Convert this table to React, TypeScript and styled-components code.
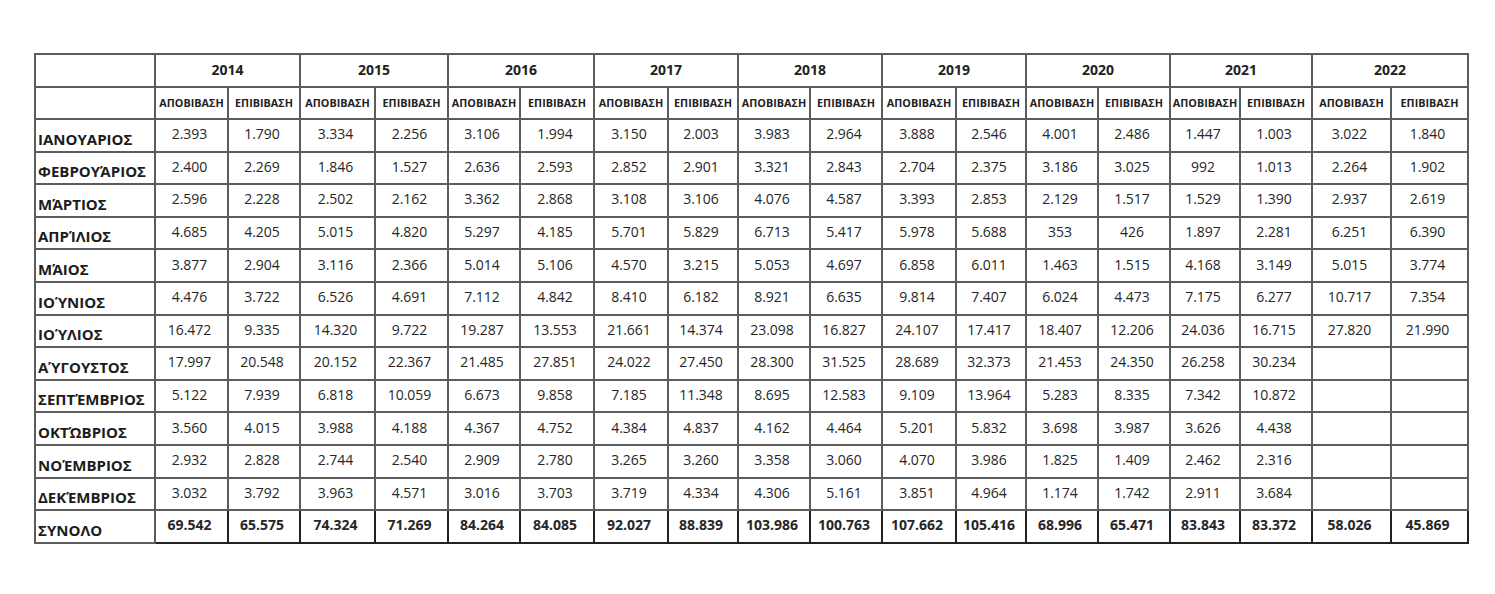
import React from "react";
import styled, { createGlobalStyle } from "styled-components";

const Global = createGlobalStyle`
  body {
    margin: 0;
    background: #ffffff;
    font-family: "Open Sans", "Liberation Sans", sans-serif;
    color: #1f1f1f;
  }
`;

const Page = styled.div`
  padding: 53px 0 0 34px;
  height: 594px;
  box-sizing: border-box;
`;

const Table = styled.table`
  border-collapse: collapse;
  table-layout: fixed;
  width: 1430px;
  border: 2px solid #202020;
`;

const line = "2px solid #5c5c5c";
const strong = "2px solid #202020";

const HeadRow = styled.tr`
  height: 32.5px;
`;

const YearCell = styled.th<{ $last?: boolean }>`
  border: ${line};
  border-left: ${(p) => (p.$last ? strong : line)};
  font-size: 14px;
  font-weight: 700;
  text-align: center;
  vertical-align: middle;
  padding: 0 0 2px;
  color: #222;
`;

const SubCell = styled.th<{ $last?: boolean }>`
  border: ${line};
  border-left: ${(p) => (p.$last ? strong : line)};
  font-size: 10.8px;
  font-weight: 700;
  text-align: center;
  vertical-align: middle;
  padding: 0;
  white-space: nowrap;
  overflow: hidden;
  color: #222;
`;

const Row = styled.tr<{ $total?: boolean }>`
  height: 32.6px;
  border-top: ${(p) => (p.$total ? strong : line)};
`;

const MonthCell = styled.td`
  border: ${line};
  font-size: 15px;
  font-weight: 700;
  vertical-align: bottom;
  padding: 0 0 2px 2px;
  white-space: nowrap;
  overflow: hidden;
  color: #1c1c1c;
`;

const NumCell = styled.td<{ $bold?: boolean; $last?: boolean }>`
  border: ${(p) => (p.$bold ? strong : line)};
  border-left: ${(p) => (p.$last || p.$bold ? strong : line)};
  font-size: 14px;
  font-weight: ${(p) => (p.$bold ? 700 : 400)};
  text-align: center;
  vertical-align: middle;
  padding: 0 4px 3px 0;
  color: #262626;
`;

const years = ["2014", "2015", "2016", "2017", "2018", "2019", "2020", "2021", "2022"];
const subWidths = [
  [73, 72], [75, 73], [72, 74], [74, 70], [72, 72], [74, 70], [72, 72], [70, 72], [79, 77],
];

const rows: [string, string[]][] = [
  ["ΙΑΝΟΥΑΡΙΟΣ", ["2.393", "1.790", "3.334", "2.256", "3.106", "1.994", "3.150", "2.003", "3.983", "2.964", "3.888", "2.546", "4.001", "2.486", "1.447", "1.003", "3.022", "1.840"]],
  ["ΦΕΒΡΟΥΆΡΙΟΣ", ["2.400", "2.269", "1.846", "1.527", "2.636", "2.593", "2.852", "2.901", "3.321", "2.843", "2.704", "2.375", "3.186", "3.025", "992", "1.013", "2.264", "1.902"]],
  ["ΜΆΡΤΙΟΣ", ["2.596", "2.228", "2.502", "2.162", "3.362", "2.868", "3.108", "3.106", "4.076", "4.587", "3.393", "2.853", "2.129", "1.517", "1.529", "1.390", "2.937", "2.619"]],
  ["ΑΠΡΊΛΙΟΣ", ["4.685", "4.205", "5.015", "4.820", "5.297", "4.185", "5.701", "5.829", "6.713", "5.417", "5.978", "5.688", "353", "426", "1.897", "2.281", "6.251", "6.390"]],
  ["ΜΆΙΟΣ", ["3.877", "2.904", "3.116", "2.366", "5.014", "5.106", "4.570", "3.215", "5.053", "4.697", "6.858", "6.011", "1.463", "1.515", "4.168", "3.149", "5.015", "3.774"]],
  ["ΙΟΎΝΙΟΣ", ["4.476", "3.722", "6.526", "4.691", "7.112", "4.842", "8.410", "6.182", "8.921", "6.635", "9.814", "7.407", "6.024", "4.473", "7.175", "6.277", "10.717", "7.354"]],
  ["ΙΟΎΛΙΟΣ", ["16.472", "9.335", "14.320", "9.722", "19.287", "13.553", "21.661", "14.374", "23.098", "16.827", "24.107", "17.417", "18.407", "12.206", "24.036", "16.715", "27.820", "21.990"]],
  ["ΑΎΓΟΥΣΤΟΣ", ["17.997", "20.548", "20.152", "22.367", "21.485", "27.851", "24.022", "27.450", "28.300", "31.525", "28.689", "32.373", "21.453", "24.350", "26.258", "30.234", "", ""]],
  ["ΣΕΠΤΈΜΒΡΙΟΣ", ["5.122", "7.939", "6.818", "10.059", "6.673", "9.858", "7.185", "11.348", "8.695", "12.583", "9.109", "13.964", "5.283", "8.335", "7.342", "10.872", "", ""]],
  ["ΟΚΤΏΒΡΙΟΣ", ["3.560", "4.015", "3.988", "4.188", "4.367", "4.752", "4.384", "4.837", "4.162", "4.464", "5.201", "5.832", "3.698", "3.987", "3.626", "4.438", "", ""]],
  ["ΝΟΈΜΒΡΙΟΣ", ["2.932", "2.828", "2.744", "2.540", "2.909", "2.780", "3.265", "3.260", "3.358", "3.060", "4.070", "3.986", "1.825", "1.409", "2.462", "2.316", "", ""]],
  ["ΔΕΚΈΜΒΡΙΟΣ", ["3.032", "3.792", "3.963", "4.571", "3.016", "3.703", "3.719", "4.334", "4.306", "5.161", "3.851", "4.964", "1.174", "1.742", "2.911", "3.684", "", ""]],
];

const totals = ["69.542", "65.575", "74.324", "71.269", "84.264", "84.085", "92.027", "88.839", "103.986", "100.763", "107.662", "105.416", "68.996", "65.471", "83.843", "83.372", "58.026", "45.869"];

export default function App() {
  return (
    <Page>
      <Global />
      <Table>
        <colgroup>
          <col style={{ width: 120 }} />
          {subWidths.flat().map((w, i) => (
            <col key={i} style={{ width: w }} />
          ))}
        </colgroup>
        <thead>
          <HeadRow>
            <YearCell />
            {years.map((y, i) => (
              <YearCell key={y} colSpan={2} $last={i === years.length - 1}>
                {y}
              </YearCell>
            ))}
          </HeadRow>
          <HeadRow>
            <SubCell />
            {years.map((y, i) => (
              <React.Fragment key={y}>
                <SubCell $last={i === years.length - 1}>ΑΠΟΒΙΒΑΣΗ</SubCell>
                <SubCell>ΕΠΙΒΙΒΑΣΗ</SubCell>
              </React.Fragment>
            ))}
          </HeadRow>
        </thead>
        <tbody>
          {rows.map(([month, values]) => (
            <Row key={month}>
              <MonthCell>{month}</MonthCell>
              {values.map((v, i) => (
                <NumCell key={i} $last={i === 16}>
                  {v}
                </NumCell>
              ))}
            </Row>
          ))}
          <Row $total>
            <MonthCell>ΣΥΝΟΛΟ</MonthCell>
            {totals.map((v, i) => (
              <NumCell key={i} $bold>
                {v}
              </NumCell>
            ))}
          </Row>
        </tbody>
      </Table>
    </Page>
  );
}
